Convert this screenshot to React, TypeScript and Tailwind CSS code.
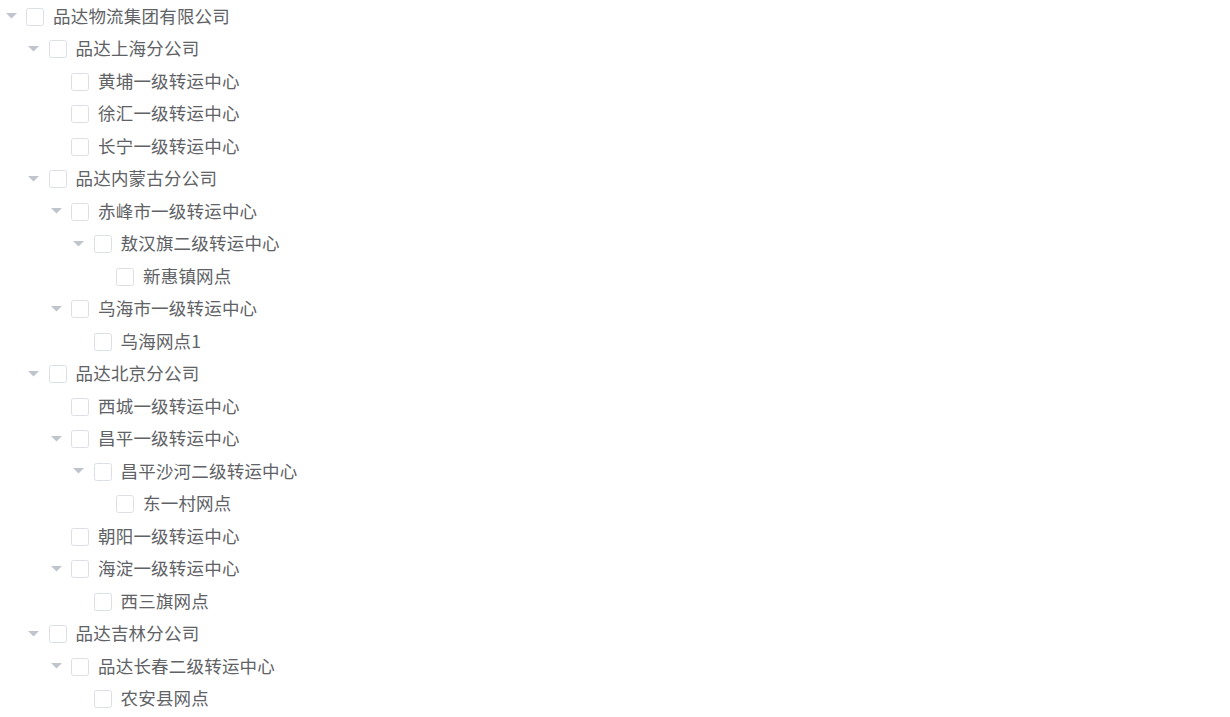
type TreeNode = {
  label: string;
  children?: TreeNode[];
};

const data: TreeNode[] = [
  {
    label: "品达物流集团有限公司",
    children: [
      {
        label: "品达上海分公司",
        children: [
          { label: "黄埔一级转运中心" },
          { label: "徐汇一级转运中心" },
          { label: "长宁一级转运中心" },
        ],
      },
      {
        label: "品达内蒙古分公司",
        children: [
          {
            label: "赤峰市一级转运中心",
            children: [
              {
                label: "敖汉旗二级转运中心",
                children: [{ label: "新惠镇网点" }],
              },
            ],
          },
          {
            label: "乌海市一级转运中心",
            children: [{ label: "乌海网点1" }],
          },
        ],
      },
      {
        label: "品达北京分公司",
        children: [
          { label: "西城一级转运中心" },
          {
            label: "昌平一级转运中心",
            children: [
              {
                label: "昌平沙河二级转运中心",
                children: [{ label: "东一村网点" }],
              },
            ],
          },
          { label: "朝阳一级转运中心" },
          {
            label: "海淀一级转运中心",
            children: [{ label: "西三旗网点" }],
          },
        ],
      },
      {
        label: "品达吉林分公司",
        children: [
          {
            label: "品达长春二级转运中心",
            children: [{ label: "农安县网点" }],
          },
        ],
      },
    ],
  },
];

// indent per level, 22.5px steps
const indent = [
  "pl-0",
  "pl-[22.5px]",
  "pl-[45px]",
  "pl-[67.5px]",
  "pl-[90px]",
];

function Caret({ hidden }: { hidden: boolean }) {
  return (
    <span className="w-[26px] h-full flex items-center shrink-0">
      {!hidden && (
        <svg width="11" height="6" viewBox="0 0 11 6" className="ml-[5.5px]">
          <path d="M0 0 L11 0 L5.5 5.5 Z" fill="#c0c4cc" />
        </svg>
      )}
    </span>
  );
}

function Row({ node, level }: { node: TreeNode; level: number }) {
  const isLeaf = !node.children || node.children.length === 0;
  return (
    <>
      <div className={`h-[32.5px] flex items-center ${indent[level]}`}>
        <Caret hidden={isLeaf} />
        <span className="w-[18px] h-[18px] border border-[#dcdfe6] rounded-[2.5px] bg-white shrink-0 mr-[9px] mt-[1px]" />
        <span className="text-[17.5px] leading-none text-[#606266] whitespace-nowrap mb-[2px] tracking-[0.2px]">
          {node.label}
        </span>
      </div>
      {node.children?.map((c) => (
        <Row key={c.label} node={c} level={level + 1} />
      ))}
    </>
  );
}

export default function App() {
  return (
    <div
      className="min-h-screen bg-white"
      style={{ fontFamily: '"Noto Sans CJK SC", "Noto Sans", sans-serif' }}
    >
      {data.map((n) => (
        <Row key={n.label} node={n} level={0} />
      ))}
    </div>
  );
}
